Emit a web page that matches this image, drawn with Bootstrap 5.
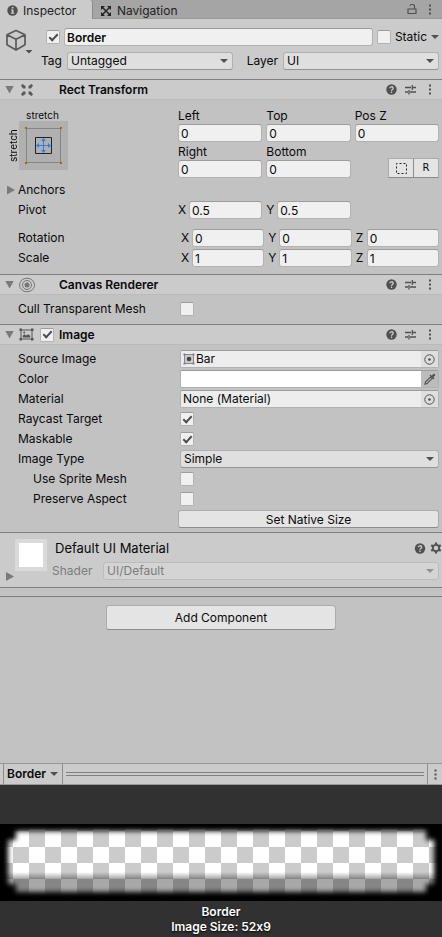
<!DOCTYPE html>
<html lang="en">
<head>
<meta charset="utf-8">
<meta name="viewport" content="width=device-width, initial-scale=1">
<title>Inspector</title>
<link href="https://cdn.jsdelivr.net/npm/bootstrap@5.3.0/dist/css/bootstrap.min.css" rel="stylesheet">
<style>
body{font-family:Inter,"Liberation Sans",sans-serif;font-size:12px;line-height:18px;color:#090909;background:#c2c2c2;font-feature-settings:"calt" 0}
svg{display:block;flex:none}
.ico{color:#505050}
button.plain{border:0;background:none;padding:0;color:#505050}
.tabbar{background:#a5a5a5;height:19px;border-bottom:1px solid #999}
.tabbar .tab{height:19px;gap:5px;padding:2px 0 0 7px;color:#222;text-decoration:none}
.tabbar .tab.on{background:#cbcbcb;border-right:1px solid #8c8c8c;border-top-right-radius:3px;width:93px}
.tools{gap:7px}
.objhead{background:#cbcbcb;padding:9px 3px 9px 5px;gap:7px}
.objrows{gap:6px}
.namerow{gap:4px;padding-left:5px}
.tagrow label{padding-right:5px}
.tagrow .pick+label{padding-left:14px}
.field{height:18px;min-width:0;width:100%;border:1px solid #b2b2b2;border-top-color:#9c9c9c;border-radius:3px;background:#f0f0f0;padding:0 2px;line-height:16px;color:#090909;font-size:12px}
.pick{position:relative;min-width:0}
.pick.tagpick{flex:17 1 0}
.pick.layerpick{flex:16 1 0}
.pick select{appearance:none;height:18px;width:100%;border:1px solid #b0b0b0;border-bottom-color:#939393;border-radius:3px;background:#dfdfdf;padding:0 16px 1px 3px;line-height:15px;color:#090909;font-size:12px;opacity:1}
.pick::after{content:"";position:absolute;right:5px;top:7px;border:4px solid transparent;border-top-color:#505050;border-bottom:0;pointer-events:none}
.pick.off select{background:#d4d4d4;border-color:#bcbcbc;color:#7c7c7c}
.pick.off::after{border-top-color:#929292}
.tick{appearance:none;width:14px;height:14px;margin:0;flex:none;border:1px solid #b2b2b2;border-top-color:#9c9c9c;border-radius:2px;background:#f0f0f0;display:grid;place-items:center}
.tick:checked::before{content:"";width:9px;height:5px;border-left:2px solid #4c4c4c;border-bottom:2px solid #4c4c4c;transform:translateY(-1px) rotate(-47deg)}
.sechead{background:#cbcbcb;border-top:1px solid #7f7f7f;border-bottom:1px solid #bababa;height:21px;padding:0 6px 0 5px}
.sechead h2{font-size:12px;line-height:18px;font-weight:600;margin:0}
.slot-icon{width:19px;margin-left:3px}
.slot-tick{width:18px;margin-right:5px}
.fold{width:9px;height:8px;background:#7a7a7a;clip-path:polygon(0 0,100% 0,50% 100%)}
.fold.shut{width:8px;height:9px;clip-path:polygon(0 0,100% 50%,0 100%)}
.anchors-row{margin-left:-11px}
.anchors-row button{gap:3px}
.lab{flex:none;width:162px}
.lab.axes{width:163px}
.lab.short{width:160px}
.lab.inner{padding-left:15px}
.props{padding:0 3px 7px 18px;gap:2px}
.props.block{padding-top:5px;padding-bottom:4px}
.props.single{padding-bottom:6px}
.prop{min-height:18px}
.tri{display:grid;grid-template-columns:repeat(3,minmax(0,1fr));grid-auto-rows:18px;column-gap:4px}
.axis{gap:3px}
.axis label{flex:none;width:8px}
.rect{padding:6px 3px 3px 7px}
.rect label{padding-top:1px}
.anchor{width:171px;flex:none;padding-top:3px}
.anchor .cap{font-size:10px;line-height:12px}
.anchor .side{writing-mode:vertical-rl;transform:rotate(180deg);width:12px;height:49px;text-align:center}
.anchor .top{width:49px;margin-left:11px;text-align:center}
.modes{justify-self:end;align-self:end;height:20px;width:51px}
.modes button,.wide{border:1px solid #acacac;border-bottom-color:#8c8c8c;background:#e4e4e4;color:#090909;padding:0;border-radius:3px;font-size:12px}
.modes button{flex:1;display:grid;place-items:center;border-radius:0}
.modes button+button{border-left-color:#8c8c8c;margin-left:-1px}
.modes span{font-family:"DejaVu Sans",sans-serif;font-size:10px;line-height:12px}
.wide{height:18px;line-height:15px}
.wide.add{width:52%;height:25px;line-height:22px}
.objfield{height:18px;border:1px solid #b2b2b2;border-top-color:#9c9c9c;border-radius:2px;background:#ededed;padding:0 0 0 2px;line-height:16px;overflow:hidden;gap:1px}
.objfield button.plain{background:#dedede;width:17px;align-self:stretch;display:grid;place-items:center}
.objfield.swatch{background:#c2c2c2;padding:0;gap:0}
.swatch input{appearance:none;border:0;padding:0;background:#fff;height:16px;flex:1;min-width:0}
.swatch input::-webkit-color-swatch-wrapper{padding:0}
.swatch input::-webkit-color-swatch{border:0}
.objfield.swatch button.plain{background:#bcbcbc}
.mat{background:#cbcbcb;border-top:1px solid #7f7f7f;border-bottom:1px solid #7f7f7f;padding:6px 3px 5px 6px}
.mat h2{font-size:13px;line-height:18px;font-weight:400;margin:0}
.thumb{width:32px;height:32px;background:#fff;border:4px solid #dadada}
.matfold{width:9px;padding-bottom:1px}
.matbody{margin-left:4px;gap:5px;padding-bottom:2px}
.matbody .shade{width:52px;padding-left:1px;color:#7c7c7c}
.mattools{gap:4px;margin-right:-3px}
.split{border-bottom:1px solid #7f7f7f;height:9px}
.pbar{background:#cbcbcb;border-top:1px solid #999;border-bottom:1px solid #999;height:22px}
.pname{border:0;border-left:1px solid #8c8c8c;border-right:1px solid #8c8c8c;background:none;margin-left:3px;padding:0 4px 0 3px;gap:4px;font-weight:600;color:#090909}
.grip{height:4px;border-top:1px solid #808080;border-bottom:1px solid #808080;margin:0 3px}
.pmenu{border-left:1px solid #8c8c8c!important;width:15px}
.down{width:8px;height:4px;background:#505050;clip-path:polygon(0 0,100% 0,50% 100%)}
.stage{background:#313131;color:#fff;padding-top:39px}
.stage p{font-weight:600;line-height:15px;text-shadow:0 1px 2px #000;padding:3px 0}
</style>
<script src="https://cdn.jsdelivr.net/npm/bootstrap@5.3.0/dist/js/bootstrap.bundle.min.js"></script>
</head>
<body class="d-flex flex-column min-vh-100">
<svg width="0" height="0" class="position-absolute" aria-hidden="true">
<symbol id="help" viewBox="0 0 11 11"><circle cx="5.500" cy="5.500" r="5.200" fill="currentColor"/><path d="M3.800 4.300a1.700 1.500 0 1 1 2.500 1.300q-.8.400-.8 1.200M5.500 7.600v1.300" fill="none" stroke="#cbcbcb" stroke-width="1.300"/></symbol>
<symbol id="preset" viewBox="0 0 11 11"><path d="M0 3.500h6M8 3.500h3M7.300 1v5M0 8h3M5 8h6M4 6v4.500" fill="none" stroke="currentColor" stroke-width="1.300"/></symbol>
<symbol id="dots" viewBox="0 0 3 11"><path d="M.5.500h2v2h-2zM.5 4.500h2v2h-2zM.5 8.500h2v2h-2z" fill="currentColor"/></symbol>
<symbol id="target" viewBox="0 0 11 11"><circle cx="5.500" cy="5.500" r="4.700" fill="none" stroke="currentColor"/><circle cx="5.500" cy="5.500" r="1.300" fill="currentColor"/></symbol>
</svg>

<nav class="tabbar d-flex">
<a href="#" class="tab on d-flex align-items-center"><svg width="11" height="11" viewBox="0 0 11 11" class="ico"><circle cx="5.500" cy="5.500" r="5.200" fill="currentColor"/><path d="M4.700 2h1.800v1.500H4.700zM4 4.500h2.500v3.300h.8v1H3.900v-1h.8V5.500H4z" fill="#cbcbcb"/></svg>Inspector</a>
<a href="#" class="tab d-flex align-items-center"><svg width="12" height="12" viewBox="0 0 12 12"><path d="M2 10 10 2M2 2l8 8" fill="none" stroke="#222" stroke-width="1.400"/><path d="M1 1h4L1 5zM11 1v4L7 1zM1 11V7l4 4zM11 11H7l4-4z" fill="#222"/></svg>Navigation</a>
<div class="d-flex align-items-center ms-auto pe-2">
<button class="plain me-2" aria-label="Lock"><svg width="12" height="12" viewBox="1 0 12 12"><path d="M3 6h8v4.500H3zM9.500 6V3.200A1.700 1.700 0 0 0 7.800 1.500h-1A1.700 1.700 0 0 0 5.200 3" fill="none" stroke="currentColor" stroke-width="1.200"/></svg></button>
<button class="plain" aria-label="Menu"><svg width="8" height="11"><use href="#dots"/></svg></button>
</div>
</nav>

<header class="objhead d-flex">
<svg width="29" height="26" viewBox="0 0 29 26"><path d="M11 2.500 20 6.800v10L11 22 2 16.800v-10zM2 6.800l9 4.500 9-4.500M11 11.300V22" fill="none" stroke="#5a5a5a" stroke-width="1.700" stroke-linejoin="round"/><path d="M20.500 22h7L24 25.500z" fill="#505050"/></svg>
<div class="objrows d-flex flex-column flex-grow-1">
<div class="namerow d-flex align-items-center">
<input class="tick" type="checkbox" checked aria-label="Active">
<input class="field fw-semibold flex-grow-1" value="Border" aria-label="Name">
<input class="tick" type="checkbox" id="static"><label for="static">Static</label><button class="plain" aria-label="Static options"><span class="down d-block"></span></button>
</div>
<div class="tagrow d-flex align-items-center">
<label for="tag">Tag</label>
<div class="pick tagpick"><select id="tag"><option>Untagged</option></select></div>
<label for="layer">Layer</label>
<div class="pick layerpick"><select id="layer"><option>UI</option></select></div>
</div>
</div>
</header>

<section>
<div class="sechead d-flex align-items-center"><span class="fold"></span>
<span class="slot-icon d-flex justify-content-center"><svg width="14" height="14" viewBox="0 0 14 14"><path d="m1 2.500 1.500-1.500 3 2v2.500H3zM13 2.500 11.500 1l-3 2v2.500H11zM1 11.500 2.500 13l3-2V8.500H3zM13 11.500 11.500 13l-3-2V8.500H11z" fill="#5a5a5a"/></svg></span><span class="slot-tick"></span>
<h2 class="flex-grow-1">Rect Transform</h2>
<div class="tools d-flex"><button class="plain" aria-label="Help"><svg width="11" height="11"><use href="#help"/></svg></button><button class="plain" aria-label="Presets"><svg width="13" height="11"><use href="#preset"/></svg></button><button class="plain" aria-label="More"><svg width="12" height="11"><use href="#dots"/></svg></button></div></div>
<div class="rect d-flex">
<div class="anchor"><div class="cap top">stretch</div>
<div class="d-flex"><div class="cap side">stretch</div>
<svg width="49" height="49" viewBox="0 0 49 49"><path fill="#b0b0b0" d="M0 0h49v49H0z"/><path d="M7.500 7.500h34v34h-34z" fill="none" stroke="#858585"/><path d="M6 6h2v2H6zM41 6h2v2h-2zM6 41h2v2H6zM41 41h2v2h-2z" fill="#a66a00"/><path d="M16.500 16.500h16v16h-16z" fill="none" stroke="#222"/><path d="M24.500 18v13M18 24.500h13" stroke="#2f7fe8"/><path d="m24.500 17 2.500 3h-5zM24.500 32l2.500-3h-5zM17 24.500l3-2.500v5zM32 24.500l-3-2.500v5z" fill="#2f7fe8"/></svg></div></div>
<div class="tri flex-grow-1">
<label for="left">Left</label><label for="top">Top</label><label for="posz">Pos Z</label>
<input class="field" id="left" value="0"><input class="field" id="top" value="0"><input class="field" id="posz" value="0">
<label for="right">Right</label><label for="bottom">Bottom</label><span></span>
<input class="field" id="right" value="0"><input class="field" id="bottom" value="0">
<div class="modes d-flex"><button aria-label="Blueprint mode"><svg width="11" height="11" viewBox="0 0 11 11"><path d="M.5.500h10v10H.5z" fill="none" stroke="#222" stroke-dasharray="2 2" stroke-dashoffset="1"/></svg></button><button aria-label="Raw edit mode"><span>R</span></button></div>
</div>
</div>
<div class="props d-flex flex-column">
<div class="prop anchors-row d-flex align-items-center"><button class="plain d-flex align-items-center text-reset"><span class="fold shut"></span>Anchors</button></div>
<div class="prop d-flex align-items-center mb-2"><span class="lab short">Pivot</span><div class="tri flex-grow-1"><div class="axis d-flex"><label for="px">X</label><input class="field" id="px" value="0.5"></div><div class="axis d-flex"><label for="py">Y</label><input class="field" id="py" value="0.5"></div></div></div>
<div class="prop d-flex align-items-center"><span class="lab axes">Rotation</span><div class="tri flex-grow-1"><div class="axis d-flex"><label for="rx">X</label><input class="field" id="rx" value="0"></div><div class="axis d-flex"><label for="ry">Y</label><input class="field" id="ry" value="0"></div><div class="axis d-flex"><label for="rz">Z</label><input class="field" id="rz" value="0"></div></div></div>
<div class="prop d-flex align-items-center"><span class="lab axes">Scale</span><div class="tri flex-grow-1"><div class="axis d-flex"><label for="sx">X</label><input class="field" id="sx" value="1"></div><div class="axis d-flex"><label for="sy">Y</label><input class="field" id="sy" value="1"></div><div class="axis d-flex"><label for="sz">Z</label><input class="field" id="sz" value="1"></div></div></div>
</div>
</section>

<section>
<div class="sechead d-flex align-items-center"><span class="fold"></span>
<span class="slot-icon d-flex justify-content-center"><svg width="16" height="16" viewBox="0 0 16 16"><g fill="none" stroke="#777"><ellipse cx="8" cy="8" rx="7.500" ry="6.800"/><circle cx="8" cy="8" r="4.500"/></g><circle cx="8" cy="8" r="2.500" fill="#777"/></svg></span><span class="slot-tick"></span>
<h2 class="flex-grow-1">Canvas Renderer</h2>
<div class="tools d-flex"><button class="plain" aria-label="Help"><svg width="11" height="11"><use href="#help"/></svg></button><button class="plain" aria-label="Presets"><svg width="13" height="11"><use href="#preset"/></svg></button><button class="plain" aria-label="More"><svg width="12" height="11"><use href="#dots"/></svg></button></div></div>
<div class="props block single d-flex flex-column"><div class="prop d-flex align-items-center"><label class="lab" for="cull">Cull Transparent Mesh</label><input class="tick" type="checkbox" id="cull"></div></div>
</section>

<section>
<div class="sechead d-flex align-items-center"><span class="fold"></span>
<span class="slot-icon d-flex justify-content-center"><svg width="15" height="13" viewBox="0 0 15 13"><path d="M2 2h11v9H2z" fill="none" stroke="#555"/><path d="M.5.500h2.500v2.500H.5zM12 .5h2.500v2.500H12zM.5 10h2.500v2.500H.5zM12 10h2.500v2.500H12zM3.800 9.500V7.500l1.700-1.200L7 7.500l2-1.200 2.200 1.400v1.800z" fill="#555"/><circle cx="5.200" cy="4.500" r="1" fill="#555"/></svg></span><span class="slot-tick d-flex justify-content-end"><input class="tick" type="checkbox" checked aria-label="Image enabled"></span>
<h2 class="flex-grow-1">Image</h2>
<div class="tools d-flex"><button class="plain" aria-label="Help"><svg width="11" height="11"><use href="#help"/></svg></button><button class="plain" aria-label="Presets"><svg width="13" height="11"><use href="#preset"/></svg></button><button class="plain" aria-label="More"><svg width="12" height="11"><use href="#dots"/></svg></button></div></div>
<div class="props block d-flex flex-column">
<div class="prop d-flex align-items-center"><span class="lab">Source Image</span><div class="objfield d-flex align-items-center flex-grow-1"><svg width="12" height="12" viewBox="0 0 12 12"><path d="M1.500 1.500h9v9h-9z" fill="#ccc" stroke="#888"/><circle cx="6" cy="6" r="2.300" fill="#444"/><path d="M.5.500h2v2h-2zM9.500.500h2v2h-2zM.5 9.500h2v2h-2zM9.500 9.500h2v2h-2z" fill="#8d6fb8"/></svg><span class="flex-grow-1">Bar</span><button class="plain" aria-label="Choose sprite"><svg width="11" height="11"><use href="#target"/></svg></button></div></div>
<div class="prop d-flex align-items-center"><label class="lab" for="color">Color</label><div class="objfield swatch d-flex flex-grow-1"><input type="color" id="color" value="#ffffff"><button class="plain" aria-label="Pick a color"><svg width="12" height="12" viewBox="0 0 12 12"><path d="M1 11.200 1.500 9l5-5 1.600 1.600-5 5z" fill="none" stroke="#505050" stroke-width="1.100"/><path d="m5.500 2.500 4 4 1-1-1.200-1.200L11.500 2 10 .5 7.700 2.700 6.500 1.500z" fill="#505050"/></svg></button></div></div>
<div class="prop d-flex align-items-center"><span class="lab">Material</span><div class="objfield d-flex align-items-center flex-grow-1"><span class="flex-grow-1">None (Material)</span><button class="plain" aria-label="Choose material"><svg width="11" height="11"><use href="#target"/></svg></button></div></div>
<div class="prop d-flex align-items-center"><label class="lab" for="ray">Raycast Target</label><input class="tick" type="checkbox" checked id="ray"></div>
<div class="prop d-flex align-items-center"><label class="lab" for="maskable">Maskable</label><input class="tick" type="checkbox" checked id="maskable"></div>
<div class="prop d-flex align-items-center"><label class="lab" for="itype">Image Type</label><div class="pick flex-grow-1"><select id="itype"><option>Simple</option></select></div></div>
<div class="prop d-flex align-items-center"><label class="lab inner" for="mesh">Use Sprite Mesh</label><input class="tick" type="checkbox" id="mesh"></div>
<div class="prop d-flex align-items-center"><label class="lab inner" for="aspect">Preserve Aspect</label><input class="tick" type="checkbox" id="aspect"></div>
<div class="prop d-flex"><span class="lab short"></span><button class="wide flex-grow-1">Set Native Size</button></div>
</div>
</section>

<section class="mat d-flex">
<div class="matfold align-self-end"><div class="fold shut"></div></div>
<div class="thumb flex-shrink-0"></div>
<div class="matbody d-flex flex-column flex-grow-1">
<div class="d-flex align-items-center ps-1"><h2 class="flex-grow-1">Default UI Material</h2>
<div class="mattools d-flex"><button class="plain" aria-label="Help"><svg width="12" height="11"><use href="#help"/></svg></button>
<button class="plain" aria-label="Settings"><svg width="12" height="12" viewBox="0 0 12 12"><circle cx="6" cy="6" r="3.200" fill="none" stroke="#505050" stroke-width="1.800"/><path d="M6 .5v2M6 9.500v2M1.200 3.200l1.800 1M9 7.800l1.800 1M1.200 8.800l1.800-1M9 4.200l1.800-1" stroke="#505050" stroke-width="2.200"/></svg></button></div></div>
<div class="d-flex align-items-center"><label class="shade" for="shader">Shader</label><div class="pick off flex-grow-1"><select id="shader" disabled><option>UI/Default</option></select></div></div>
</div>
</section>
<div class="split"></div>
<div class="d-flex justify-content-center pt-2"><button class="wide add">Add Component</button></div>

<footer class="mt-auto">
<div class="pbar d-flex align-items-center">
<button class="pname d-flex align-items-center align-self-stretch">Border<span class="down"></span></button>
<div class="grip flex-grow-1"></div>
<button class="plain pmenu d-flex align-items-center justify-content-center align-self-stretch" aria-label="Preview menu"><svg width="3" height="11"><use href="#dots"/></svg></button>
</div>
<div class="stage">
<svg class="w-100" viewBox="0 0 442 77" role="img" aria-label="Border sprite preview">
<defs>
<pattern id="check" x="13" y="23" width="32" height="32" patternUnits="userSpaceOnUse"><path d="M0 0h32v32H0z" fill="#fff"/><path d="M0 0h16v16H0zM16 16h16v16H16z" fill="#cbcbcb"/></pattern>
<linearGradient id="dim" x1="0" x2="0" y1="0" y2="1"><stop offset="0" stop-opacity="0"/><stop offset="1" stop-opacity=".3"/></linearGradient>
<filter id="soft" x="-5%" y="-20%" width="110%" height="140%"><feGaussianBlur stdDeviation="2.400"/></filter>
<mask id="shape"><path d="M16 7h410v9h8v44h-8v8H16v-8H8V16h8z" fill="#fff" filter="url(#soft)"/></mask>
</defs>
<path d="M0 0h442v77H0z"/>
<g mask="url(#shape)"><path d="M0 0h442v77H0z" fill="url(#check)"/><path d="M0 48h442v6H0z" fill="url(#dim)"/><path d="M0 54h442v23H0z" fill-opacity=".34"/></g>
</svg>
<p class="text-center m-0">Border<br>Image Size: 52x9</p>
</div>
</footer>
</body>
</html>
